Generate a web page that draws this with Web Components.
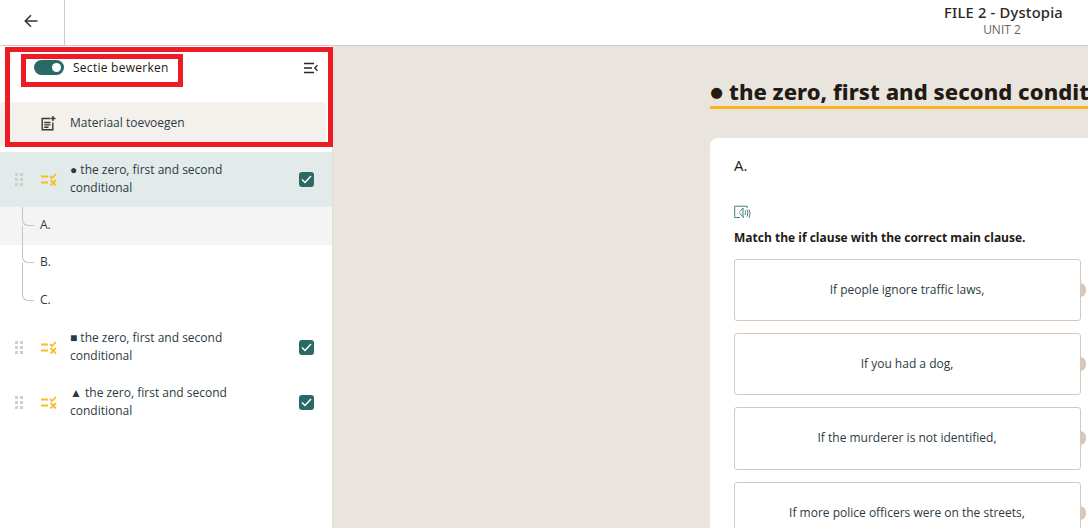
<!DOCTYPE html>
<html>
<head>
<meta charset="utf-8">
<title>FILE 2 - Dystopia</title>
<style>
  html, body { margin: 0; height: 100%; overflow: hidden; }
  body { font-family: "Open Sans", "Liberation Sans", sans-serif; color: #231a14; }
</style>
</head>
<body>
<app-shell>
  <top-bar slot="top" title-text="FILE 2 - Dystopia" sub-text="UNIT 2"></top-bar>
  <side-panel slot="side">
    <outline-section label="● the zero, first and second conditional" active>
      <outline-child selected>A.</outline-child>
      <outline-child>B.</outline-child>
      <outline-child last>C.</outline-child>
    </outline-section>
    <outline-section label="■ the zero, first and second conditional"></outline-section>
    <outline-section label="▲ the zero, first and second conditional"></outline-section>
  </side-panel>
  <lesson-view slot="main" heading="● the zero, first and second conditional">
    <exercise-card letter="A." prompt="Match the if clause with the correct main clause.">
      <match-box>If people ignore traffic laws,</match-box>
      <match-box>If you had a dog,</match-box>
      <match-box>If the murderer is not identified,</match-box>
      <match-box>If more police officers were on the streets,</match-box>
    </exercise-card>
  </lesson-view>
</app-shell>

<script>
class AppShell extends HTMLElement {
  constructor() {
    super();
    this.attachShadow({ mode: "open" });
    this.shadowRoot.innerHTML = `
    <style>
      :host { display: flex; flex-direction: column; width: 1088px; height: 528px; overflow: hidden; }
      .body { flex: 1; display: flex; min-height: 0; }
    </style>
    <slot name="top"></slot>
    <div class="body">
      <slot name="side"></slot>
      <slot name="main"></slot>
    </div>`;
  }
}

class TopBar extends HTMLElement {
  constructor() {
    super();
    this.attachShadow({ mode: "open" });
  }
  connectedCallback() {
    this.shadowRoot.innerHTML = `
    <style>
      :host { display: flex; height: 45px; background: #fff; border-bottom: 1px solid #cfcbc7; flex: none; }
      .back { width: 64px; border-right: 1px solid #d9c8b9; display: flex; align-items: center; justify-content: center; }
      .back svg { display: block; margin: -4px 2px 0 0; }
      .titles { flex: 1; display: flex; flex-direction: column; align-items: flex-end; padding: 4px 25px 0 0; }
      .inner { text-align: center; }
      .title { font: 500 14.7px/17px "Noto Sans", Lato, sans-serif; letter-spacing: .22px; color: #2b2622; }
      .sub { font: 400 12px/17px "Open Sans", sans-serif; color: #6b6661; padding-right: 3px; }
    </style>
    <div class="back">
      <svg width="14" height="14" viewBox="0 0 14 14" fill="none" stroke="#3a3531" stroke-width="1.6">
        <path d="M13.5 7H1.5M7 1.2 1.3 7 7 12.8"/>
      </svg>
    </div>
    <div class="titles">
      <div class="inner">
        <div class="title">${this.getAttribute("title-text")}</div>
        <div class="sub">${this.getAttribute("sub-text")}</div>
      </div>
    </div>`;
  }
}

class SidePanel extends HTMLElement {
  constructor() {
    super();
    this.attachShadow({ mode: "open" });
    this.shadowRoot.innerHTML = `
    <style>
      :host { display: block; position: relative; width: 332px; height: 100%; background: #fff; border-right: 1px solid #e2ded9; flex: none; font-size: 12px; }
      .tools { height: 56px; display: flex; align-items: flex-start; justify-content: space-between; padding: 14px 14px 0 34px; box-sizing: border-box; }
      .toggle-wrap { display: flex; align-items: center; gap: 9px; font: 500 12px/15px "Open Sans", sans-serif; letter-spacing: .27px; color: #231a14; }
      .toggle { width: 30px; height: 15px; border-radius: 8px; background: #2a6a66; position: relative; }
      .toggle::after { content: ""; position: absolute; right: 3px; top: 3px; width: 9px; height: 9px; border-radius: 50%; background: #fff; }
      .add { margin: 0 6px 6px 0; height: 44px; background: #f4f0ec; border-radius: 4px 4px 0 0; display: flex; align-items: center; gap: 14px; padding: 0 0 2px 41px; box-sizing: border-box; font: 400 12px/16px "Open Sans", sans-serif; color: #2c3a44; }
      .mark { position: absolute; box-sizing: border-box; border: 5px solid #ed1c24; pointer-events: none; }
      .outer { left: 5px; top: 1px; width: 328px; height: 100px; }
      .inner { left: 21px; top: 8px; width: 162px; height: 33px; }
    </style>
    <div class="tools">
      <div class="toggle-wrap"><span class="toggle"></span>Sectie bewerken</div>
      <svg width="14" height="12" viewBox="0 0 14 12" fill="none" stroke="#2b2622" style="margin-top:2px">
        <path stroke-width="1.5" d="M0 1.5H10M0 6H8M0 10.5H10"/>
        <path stroke-width="1.3" d="M13.5 3.2 10.7 6l2.8 2.8"/>
      </svg>
    </div>
    <div class="add">
      <svg width="15" height="15" viewBox="0 0 15 15" fill="none" stroke="#3a3531" stroke-width="1.4">
        <path d="M9 2.5H1.2v11.3h10.6V6.5"/>
        <path d="M3.2 6.5H9.5M3.2 8.9H9.5M3.2 11.3H7.5"/>
        <path d="M12 0V5M9.5 2.5H14.5"/>
      </svg>
      Materiaal toevoegen
    </div>
    <slot></slot>
    <div class="mark outer"></div>
    <div class="mark inner"></div>`;
  }
}

class OutlineSection extends HTMLElement {
  constructor() {
    super();
    this.attachShadow({ mode: "open" });
  }
  connectedCallback() {
    this.shadowRoot.innerHTML = `
    <style>
      :host { display: block; }
      .row { height: 55px; display: flex; align-items: center; box-sizing: border-box; padding-left: 15px; }
      :host([active]) .row { background: #e3eaea; }
      .grip { display: block; flex: none; }
      .kind { display: block; flex: none; margin-left: 17px; }
      .label { width: 178px; margin: -2px 0 0 13px; font: 400 12px/18px "Open Sans", sans-serif; color: #2c3a44; }
      .check { margin-left: 51px; width: 15px; height: 15px; border-radius: 3px; background: #2a6a66; display: flex; align-items: center; justify-content: center; flex: none; }
      .tree { position: relative; }
      :host(:not([active])) .tree { display: none; }
      :host([active]) .tree { padding-bottom: .5px; }
      .check svg { display: block; }
    </style>
    <div class="row">
      <svg class="grip" width="9" height="13" viewBox="0 0 9 13" fill="#d0d0d0">
        <rect x="0" y="0" width="3" height="3"/><rect x="5" y="0" width="3" height="3"/>
        <rect x="0" y="5" width="3" height="3"/><rect x="5" y="5" width="3" height="3"/>
        <rect x="0" y="10" width="3" height="3"/><rect x="5" y="10" width="3" height="3"/>
      </svg>
      <svg class="kind" width="16" height="13" viewBox="0 0 16 13" fill="none" stroke="#fbbc2c" stroke-width="2">
        <path d="M0 3.5H7M0 9.5H7"/>
        <path stroke-width="1.8" d="M9 3 11 5 15 .8M9.5 7 15 12.5M15 7 9.5 12.5"/>
      </svg>
      <div class="label">${this.getAttribute("label")}</div>
      <span class="check">
        <svg width="11" height="9" viewBox="0 0 11 9" fill="none" stroke="#fff" stroke-width="1.5"><path d="M1 4.5 4 7.5 10 1"/></svg>
      </span>
    </div>
    <div class="tree"><slot></slot></div>`;
  }
}

class OutlineChild extends HTMLElement {
  constructor() {
    super();
    this.attachShadow({ mode: "open" });
    this.shadowRoot.innerHTML = `
    <style>
      :host { display: flex; align-items: center; height: 37.5px; box-sizing: border-box; padding: 0 0 2px 40px; position: relative; font: 400 12px/16px "Open Sans", sans-serif; color: #2c3a44; }
      :host([selected]) { background: #f4f4f4; }
      .line { position: absolute; left: 22px; top: 0; height: 50%; width: 12px; border-left: 1px solid #c4c4c4; border-bottom: 1px solid #c4c4c4; border-bottom-left-radius: 6px; box-sizing: border-box; }
      .rest { position: absolute; left: 22px; top: 50%; bottom: 0; border-left: 1px solid #c4c4c4; }
      :host([last]) .rest { display: none; }
    </style>
    <span class="line"></span><span class="rest"></span><slot></slot>`;
  }
}

class LessonView extends HTMLElement {
  constructor() {
    super();
    this.attachShadow({ mode: "open" });
  }
  connectedCallback() {
    this.shadowRoot.innerHTML = `
    <style>
      :host { display: block; flex: 1; min-width: 0; background: #e9e4de; overflow: hidden; padding: 32px 0 0 377px; box-sizing: border-box; height: 100%; }
      h1 { margin: 0; width: 700px; white-space: nowrap; font: 800 22px/26px "Noto Sans", Lato, sans-serif; letter-spacing: .05px; color: #231a14; border-bottom: 3px solid #fbb41a; height: 28px; }
      .gap { height: 29px; }
    </style>
    <h1>${this.getAttribute("heading")}</h1>
    <div class="gap"></div>
    <slot></slot>`;
  }
}

class ExerciseCard extends HTMLElement {
  constructor() {
    super();
    this.attachShadow({ mode: "open" });
  }
  connectedCallback() {
    this.shadowRoot.innerHTML = `
    <style>
      :host { display: block; width: 700px; height: 500px; box-sizing: border-box; background: #fff; border-radius: 8px 0 0 0; padding: 17px 0 0 24px; }
      .letter { font: 500 15px/20px "Open Sans", sans-serif; color: #231a14; }
      svg { display: block; margin-top: 30px; }
      .prompt { margin: 11px 0 13px; font: 700 12px/16px "Open Sans", sans-serif; color: #231a14; }
      .list { display: flex; flex-direction: column; gap: 12px; width: 347px; }
    </style>
    <div class="letter">${this.getAttribute("letter")}</div>
    <svg width="18" height="14" viewBox="0 0 18 14" fill="none" stroke="#4c7f7c" stroke-width="1">
      <path d="M6 12.5H.7V1.2H13.2V3M10 12.5H9"/>
      <path d="M5.5 6.8 9 3V12L5.5 7.8"/>
      <path d="M11 5.5Q12.2 7.5 11 10M13 4.5Q14.8 7.5 13 11.5M15 4.5Q17.2 8 15 13"/>
    </svg>
    <div class="prompt">${this.getAttribute("prompt")}</div>
    <div class="list"><slot></slot></div>`;
  }
}

class MatchBox extends HTMLElement {
  constructor() {
    super();
    this.attachShadow({ mode: "open" });
    this.shadowRoot.innerHTML = `
    <style>
      :host { display: flex; position: relative; align-items: center; justify-content: center; height: 62.2px; box-sizing: border-box; border: 1px solid #d9c8b9; border-radius: 3px; background: #fff; padding-right: 1px; font: 400 12px/16px "Open Sans", sans-serif; color: #2c3a44; }
      .pin { position: absolute; right: -6px; top: 50%; margin-top: -7px; width: 6px; height: 14px; background: #d9c8b9; border-radius: 0 7px 7px 0; }
    </style>
    <slot></slot><span class="pin"></span>`;
  }
}

customElements.define("app-shell", AppShell);
customElements.define("top-bar", TopBar);
customElements.define("side-panel", SidePanel);
customElements.define("outline-section", OutlineSection);
customElements.define("outline-child", OutlineChild);
customElements.define("lesson-view", LessonView);
customElements.define("exercise-card", ExerciseCard);
customElements.define("match-box", MatchBox);
</script>
</body>
</html>
